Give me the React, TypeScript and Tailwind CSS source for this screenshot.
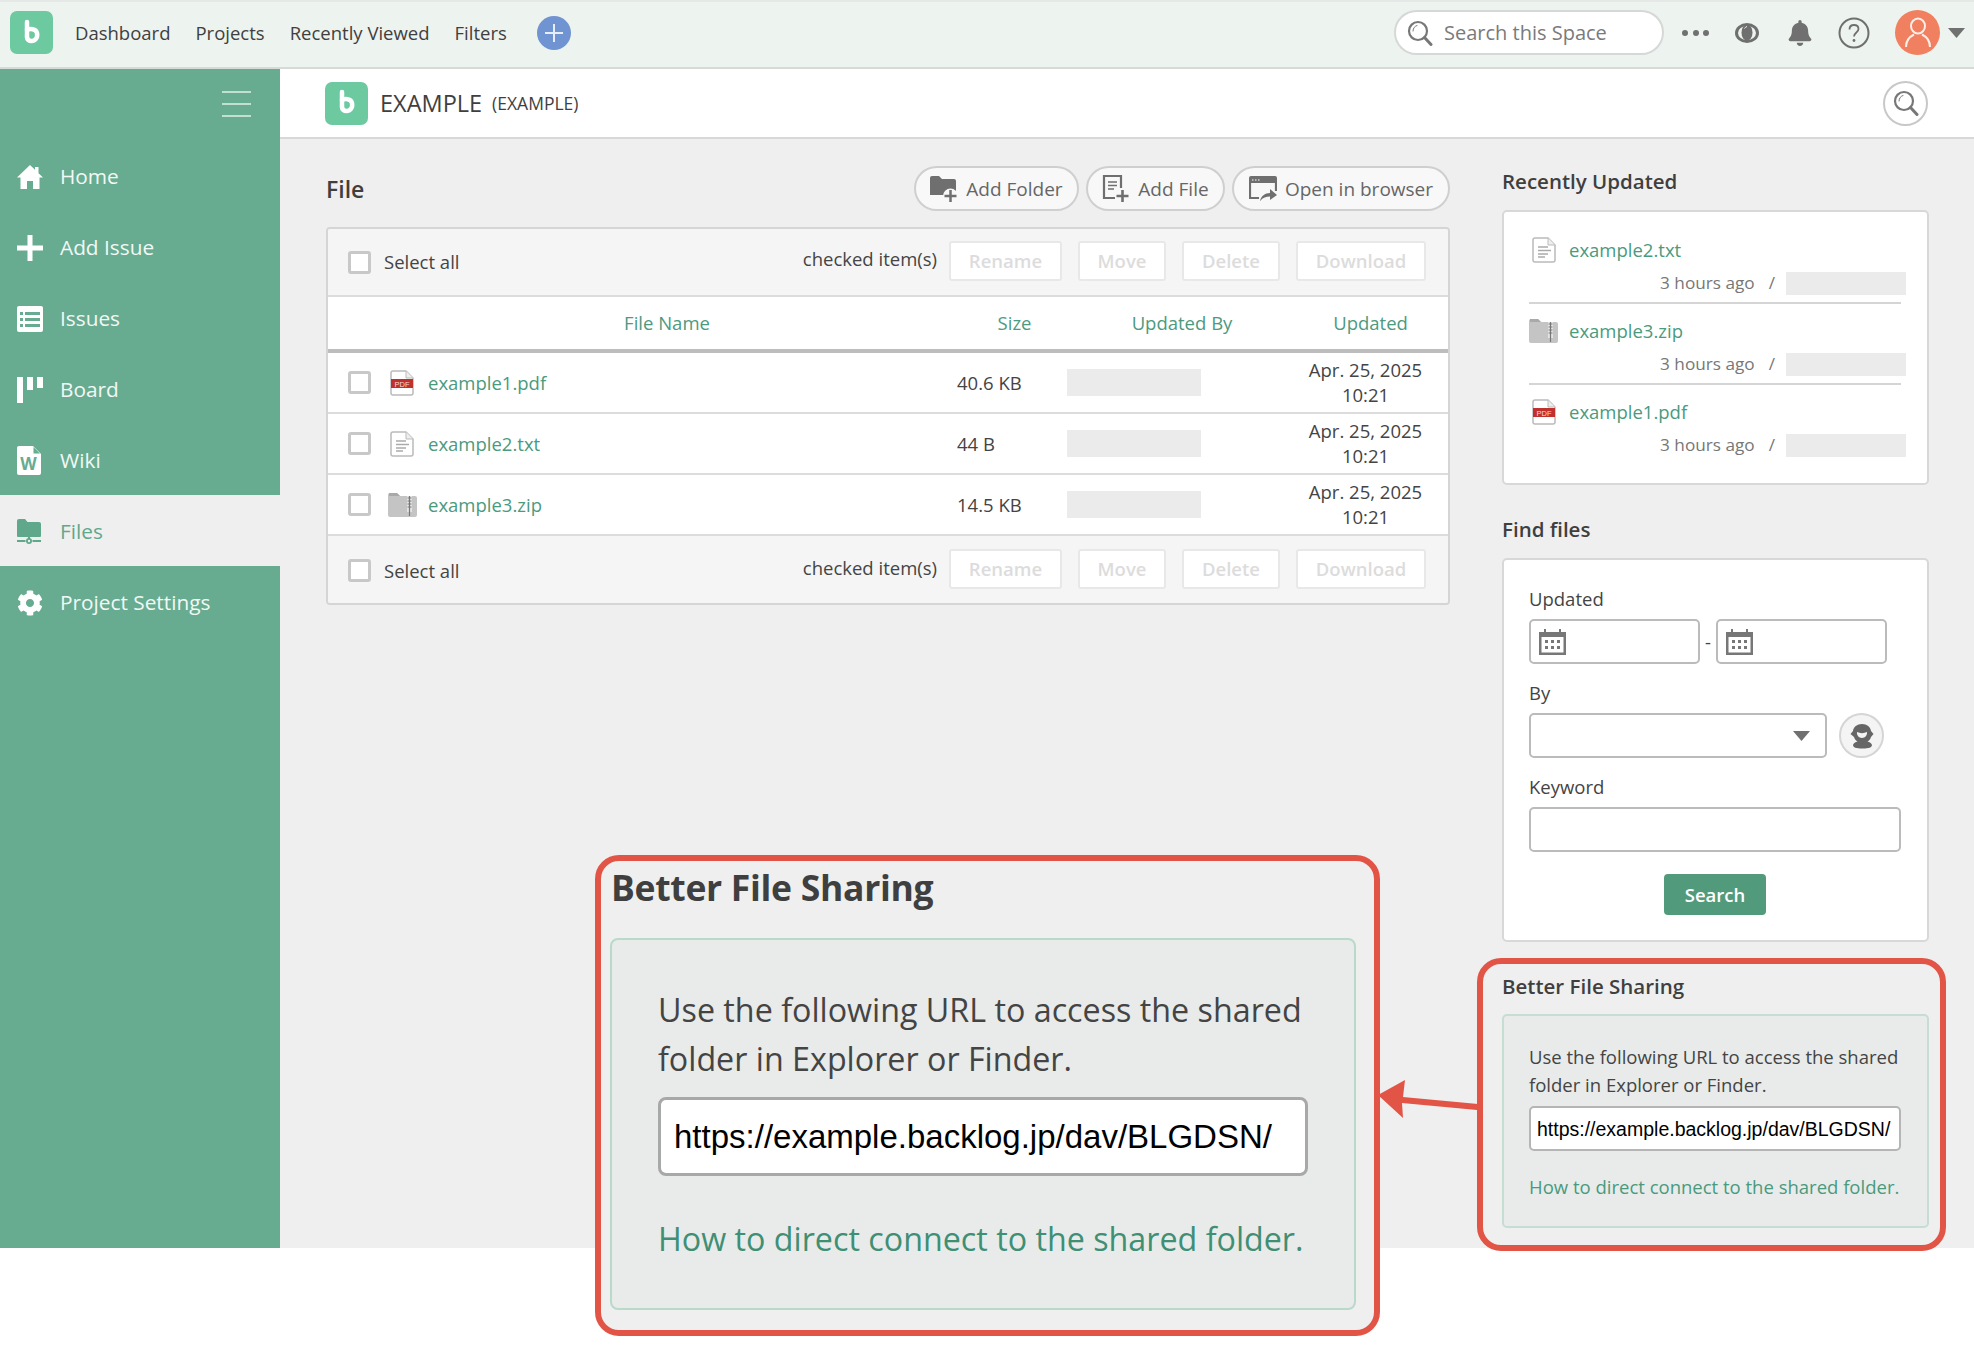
import { FaBell, FaCog } from "react-icons/fa";

const font = { fontFamily: '"Open Sans", sans-serif' };

function Logo() {
  return (
    <div className="flex h-[43px] w-[43px] shrink-0 items-center justify-center rounded-[7px] bg-[#6dc9a0]">
      <svg width="22" height="28" viewBox="0 0 22 28" fill="none" stroke="#fff" strokeWidth="4.5" strokeLinecap="round">
        <path d="M6 3v15" />
        <path d="M6 11c3-1.500 9-1.500 10 3 1 5-2 8-5.500 8-2.500 0-4.500-1.500-4.500-4" />
      </svg>
    </div>
  );
}

function Magnifier({ size = 26, color = "#777" }: { size?: number; color?: string }) {
  return (
    <svg width={size} height={size} viewBox="0 0 26 26" fill="none" stroke={color}>
      <circle cx="11" cy="11" r="9" strokeWidth="2.2" />
      <path d="M17.5 17.500 24 24.500" strokeWidth="3" strokeLinecap="round" />
      <path d="M6 11c0-3 2-5 4-5.500" strokeWidth="1" strokeLinecap="round" />
    </svg>
  );
}

function PdfIcon() {
  return (
    <svg width="24" height="26" viewBox="0 0 24 26">
      <path d="M3 1h13l7 7v15a2 2 0 0 1-2 2H3a2 2 0 0 1-2-2V3a2 2 0 0 1 2-2z" fill="#fff" stroke="#bbb" strokeWidth="1.5" />
      <path d="M16 1v7h7" fill="#eee" stroke="#bbb" strokeWidth="1" />
      <rect x="1" y="9" width="22" height="9" fill="#c0302c" />
      <text x="12" y="16.5" textAnchor="middle" fontSize="7.5" fill="#f5d9d8" style={{ fontFamily: '"Liberation Sans", sans-serif' }}>
        PDF
      </text>
    </svg>
  );
}

function TxtIcon() {
  return (
    <svg width="24" height="26" viewBox="0 0 24 26" fill="none">
      <path d="M3 1h13l7 7v15a2 2 0 0 1-2 2H3a2 2 0 0 1-2-2V3a2 2 0 0 1 2-2z" fill="#fff" stroke="#bbb" strokeWidth="1.5" />
      <path d="M16 1v7h7" fill="#eee" stroke="#bbb" strokeWidth="1" />
      <path d="M6 10h10M6 13.500h13M6 17h10M6 20h7" stroke="#aaa" strokeWidth="1.3" />
    </svg>
  );
}

function ZipIcon() {
  return (
    <svg width="29" height="24" viewBox="0 0 29 24">
      <path d="M0 2a2 2 0 0 1 2-2h7l3 3h15a2 2 0 0 1 2 2v17a2 2 0 0 1-2 2H2a2 2 0 0 1-2-2z" fill="#c4c4c4" />
      <path d="M1 0h8l3 3H1z" fill="#a9a9a9" />
      <rect x="19" y="3" width="5" height="16" fill="#e4e4e4" />
      <path d="M19.500 5h4M19.500 8h4M19.500 11h4M19.500 14h4M21.500 3v20" stroke="#777" strokeWidth="1.2" />
    </svg>
  );
}

function AddFolderIcon() {
  return (
    <svg width="28" height="28" viewBox="0 0 28 28">
      <path d="M0 3a2 2 0 0 1 2-2h7l3 3h12a2 2 0 0 1 2 2v14H0z" fill="#6f6f6f" />
      <circle cx="20.5" cy="21" r="7.5" fill="#f8f8f8" />
      <path d="M20.500 15v12M14.500 21h12" stroke="#6f6f6f" strokeWidth="2.5" />
    </svg>
  );
}

function AddFileIcon() {
  return (
    <svg width="28" height="28" viewBox="0 0 28 28" fill="none" stroke="#6f6f6f">
      <path d="M13 23H2V1h17v12" strokeWidth="2.2" />
      <path d="M6 7h9M6 10.500h9M6 14h6" strokeWidth="1.6" />
      <path d="M20.500 15v12M14.500 21h12" strokeWidth="2.6" />
    </svg>
  );
}

function OpenBrowserIcon() {
  return (
    <svg width="28" height="26" viewBox="0 0 28 26" fill="none">
      <path d="M2 0h24a2 2 0 0 1 2 2v5H0V2a2 2 0 0 1 2-2z" fill="#6f6f6f" />
      <path d="M3 4h1.500M6 4h1.500M9 4h1.500" stroke="#fff" strokeWidth="1.2" />
      <path d="M1 6v16h9M27 6v9" stroke="#6f6f6f" strokeWidth="2.2" />
      <path d="M11 25c1-5 5-8 10-8v-4l7 6-7 5v-3.500c-4 0-7 1-10 4.500z" fill="#6f6f6f" />
    </svg>
  );
}

function CalendarIcon() {
  return (
    <svg width="27" height="26" viewBox="0 0 27 26">
      <path d="M0 3h5V0h2v3h13V0h2v3h5v23H0z" fill="#777" />
      <rect x="2.5" y="8" width="22" height="15.5" fill="#fff" />
      <path d="M6 11h3v3H6zM12 11h3v3h-3zM18 11h3v3h-3zM6 17h3v3H6zM12 17h3v3h-3zM18 17h3v3h-3z" fill="#777" />
    </svg>
  );
}

const navIcons: Record<string, React.ReactNode> = {
  Home: (
    <svg width="26" height="26" viewBox="0 0 26 26" fill="#fff">
      <path d="M13 1 0 13.500h3.500V25h6.500v-8h6v8h6.500V13.500H26l-4.500-4.300V3h-3.500v2.800z" />
    </svg>
  ),
  "Add Issue": (
    <svg width="26" height="26" viewBox="0 0 26 26" fill="#fff">
      <path d="M10.500 0h5v10.500H26v5H15.500V26h-5V15.500H0v-5h10.500z" />
    </svg>
  ),
  Issues: (
    <svg width="26" height="26" viewBox="0 0 26 26">
      <rect width="26" height="26" rx="2" fill="#fff" />
      <path d="M3 6h3v3H3zM8 6h15v3H8zM3 12h3v3H3zM8 12h15v3H8zM3 18h3v3H3zM8 18h15v3H8z" fill="#67ac91" />
    </svg>
  ),
  Board: (
    <svg width="26" height="26" viewBox="0 0 26 26" fill="#fff">
      <path d="M0 0h6v26H0zM10 0h6v13h-6zM20 0h6v11h-6z" />
    </svg>
  ),
  Wiki: (
    <svg width="24" height="29" viewBox="0 0 24 29">
      <path d="M2 0h14l8 8v19a2 2 0 0 1-2 2H2a2 2 0 0 1-2-2V2a2 2 0 0 1 2-2z" fill="#fff" />
      <path d="M16.500 1 23 7.500h-6.500z" fill="#67ac91" />
      <text x="11.5" y="24" textAnchor="middle" fontSize="17" fontWeight="700" fill="#67ac91" style={font}>
        W
      </text>
    </svg>
  ),
  Files: (
    <svg width="24" height="26" viewBox="0 0 24 26" fill="#5fa88c">
      <path d="M0 2a2 2 0 0 1 2-2h6l2.500 3H22a2 2 0 0 1 2 2v12a1 1 0 0 1-1 1H1a1 1 0 0 1-1-1z" />
      <path d="M11 18h2v3h-2zM0 21h8.500v2H0zM15.500 21H24v2h-8.500z" />
      <circle cx="12" cy="22" r="3" />
      <circle cx="12" cy="22" r="1.2" fill="#efefef" />
    </svg>
  ),
  "Project Settings": <FaCog size={26} color="#fff" />,
};

const navItems = ["Home", "Add Issue", "Issues", "Board", "Wiki", "Files", "Project Settings"];

function Sidebar() {
  return (
    <aside className="flex h-[1179px] w-[280px] shrink-0 flex-col bg-[#67ac91]">
      <div className="flex h-[71px] items-start justify-end pr-[29px] pt-[22px]">
        <div className="flex w-[29px] flex-col gap-[10px]">
          <span className="h-[2px] bg-[#c3dfd3]" />
          <span className="h-[2px] bg-[#c3dfd3]" />
          <span className="h-[2px] bg-[#c3dfd3]" />
        </div>
      </div>
      {navItems.map((item) => (
        <div
          key={item}
          className={`flex h-[71px] items-center pl-[17px] pt-[2px] text-[20.8px] ${
            item === "Files" ? "bg-[#efefef] text-[#5fa88c]" : "text-[#f2f8f5]"
          }`}
        >
          <span className="flex w-[43px] justify-start">{navIcons[item]}</span>
          {item}
        </div>
      ))}
    </aside>
  );
}

function TopBar() {
  return (
    <header className="flex h-[69px] items-center border-t-2 border-b-2 border-t-[#e5e8e6] border-b-[#d8dad8] bg-[#edf3ef] pb-[4px] pl-[10px] text-[18.5px] text-[#3f3f3f]">
      <Logo />
      <nav className="ml-[22px] flex gap-[25px]">
        <span>Dashboard</span>
        <span>Projects</span>
        <span>Recently Viewed</span>
        <span>Filters</span>
      </nav>
      <div className="ml-[30px] flex h-[34px] w-[34px] items-center justify-center rounded-full bg-[#7093d2]">
        <svg width="20" height="20" viewBox="0 0 20 20" stroke="#e8eef8" strokeWidth="2">
          <path d="M10 1v18M1 10h18" />
        </svg>
      </div>
      <div className="ml-auto flex items-center pr-[9px]">
        <div className="flex h-[45px] w-[270px] items-center gap-[11px] rounded-full border-2 border-[#d5d8d6] bg-white pl-[11px] text-[20px] text-[#7a7a7a]">
          <Magnifier />
          <span>Search this Space</span>
        </div>
        <div className="ml-[18px] flex w-[27px] justify-between">
          <span className="h-[6px] w-[6px] rounded-full bg-[#707070]" />
          <span className="h-[6px] w-[6px] rounded-full bg-[#707070]" />
          <span className="h-[6px] w-[6px] rounded-full bg-[#707070]" />
        </div>
        <svg className="ml-[25px]" width="26" height="22" viewBox="0 0 26 22">
          <ellipse cx="13" cy="11" rx="12" ry="10" fill="#6f6f6f" />
          <ellipse cx="13" cy="11" rx="9" ry="7" fill="#edf3ef" />
          <ellipse cx="13" cy="10.5" rx="5.5" ry="8" fill="#6f6f6f" />
          <path d="M10.500 6.500a4 4 0 0 1 2.500-2" stroke="#edf3ef" fill="none" />
        </svg>
        <FaBell className="ml-[27px]" size={26} color="#707070" />
        <svg className="ml-[25px]" width="32" height="32" viewBox="0 0 32 32" fill="none">
          <circle cx="16" cy="16" r="14.5" stroke="#6f6f6f" strokeWidth="2" />
          <path d="M11.500 12.500c0-3 2-4.500 4.500-4.500s4.500 1.500 4.500 4c0 3.500-4.500 3.500-4.500 7.500" stroke="#6f6f6f" strokeWidth="1.8" />
          <circle cx="16" cy="23.5" r="1.4" fill="#6f6f6f" />
        </svg>
        <div className="ml-[25px] flex h-[45px] w-[45px] items-center justify-center rounded-full bg-[#f08060]">
          <svg width="28" height="32" viewBox="0 0 28 32" fill="none" stroke="#fdeee9" strokeWidth="2">
            <ellipse cx="14" cy="9" rx="7" ry="7.5" />
            <path d="M2 30c0-6 3-10 8-12.500M26 30c0-6-3-10-8-12.500" />
          </svg>
        </div>
        <svg className="ml-[8px]" width="17" height="10" viewBox="0 0 17 10" fill="#707070">
          <path d="M0 0h17l-8.500 10z" />
        </svg>
      </div>
    </header>
  );
}

function PillButton({ icon, label, className }: { icon: React.ReactNode; label: string; className: string }) {
  return (
    <button className={`flex h-[45px] items-center justify-center gap-[8px] rounded-full border-2 border-[#cfcfcf] bg-[#f8f8f8] pt-[1px] text-[19px] text-[#666] ${className}`}>
      {icon}
      {label}
    </button>
  );
}

function Checkbox() {
  return <span className="block h-[23px] w-[23px] shrink-0 rounded-[3px] border-[3px] border-[#c8c8c8] bg-white" />;
}

function Toolbar({ top }: { top: boolean }) {
  const actions = [
    { label: "Rename", w: "w-[113px]" },
    { label: "Move", w: "w-[88px]" },
    { label: "Delete", w: "w-[98px]" },
    { label: "Download", w: "w-[130px]" },
  ];
  return (
    <div className={`flex items-center bg-[#f5f5f5] pl-[20px] pr-[22px] text-[18.5px] text-[#444] ${top ? "h-[68px] border-b-2 border-[#dcdcdc]" : "h-[67px] pt-[2px]"}`}>
      <Checkbox />
      <span className="ml-[13px]">Select all</span>
      <div className="mb-[3px] ml-auto flex items-center gap-[16px]">
        <span className="-mt-[3px] mr-[-4px]">checked item(s)</span>
        {actions.map((a) => (
          <button key={a.label} className={`flex h-[40px] items-center justify-center rounded-[3px] border-2 border-[#e8e8e8] bg-white font-semibold text-[#dcdcdc] ${a.w}`}>
            {a.label}
          </button>
        ))}
      </div>
    </div>
  );
}

const files = [
  { name: "example1.pdf", size: "40.6 KB", icon: <PdfIcon /> },
  { name: "example2.txt", size: "44 B", icon: <TxtIcon /> },
  { name: "example3.zip", size: "14.5 KB", icon: <ZipIcon /> },
];

function FileTable() {
  return (
    <div className="mt-[16px] overflow-hidden rounded-[4px] border-2 border-[#d5d5d5] text-[18.5px]">
      <Toolbar top />
      <div className="grid h-[56px] grid-cols-[52px_574px_113px_230px_1fr] items-center border-b-4 border-[#bdbdbd] bg-white text-center text-[#4c9a80]">
        <span />
        <span>File Name</span>
        <span className="pl-[8px]">Size</span>
        <span>Updated By</span>
        <span className="pr-[4px]">Updated</span>
      </div>
      {files.map((f) => (
        <div key={f.name} className="grid h-[61px] grid-cols-[52px_574px_113px_230px_1fr] items-center border-b-2 border-[#dcdcdc] bg-white text-[#444]">
          <span className="pl-[20px]">
            <Checkbox />
          </span>
          <span className="flex items-center text-[#4a9a7e]">
            <span className="flex w-[48px] items-center justify-center pr-[8px] pl-[4px]">{f.icon}</span>
            {f.name}
          </span>
          <span className="pl-[3px]">{f.size}</span>
          <span className="h-[27px] w-[134px] bg-[#ebebeb]" />
          <span className="pb-[2px] pr-[14px] text-center leading-[25px]">
            Apr. 25, 2025
            <br />
            10:21
          </span>
        </div>
      ))}
      <Toolbar top={false} />
    </div>
  );
}

const recent = [
  { name: "example2.txt", icon: <TxtIcon />, divider: true },
  { name: "example3.zip", icon: <ZipIcon />, divider: true },
  { name: "example1.pdf", icon: <PdfIcon />, divider: false },
];

function RecentlyUpdated() {
  return (
    <>
      <h2 className="text-[20.5px] leading-[30px] font-semibold text-[#3f3f3f]">Recently Updated</h2>
      <div className="mt-[14px] h-[275px] rounded-[5px] border-2 border-[#d8d8d8] bg-white pl-[25px] pr-[26px] pt-[11px]">
        {recent.map((r) => (
          <div key={r.name} className={`pt-[13px] pb-[5px] ${r.divider ? "border-b-2 border-[#d5d5d5]" : ""}`}>
            <div className="flex h-[28px] items-center text-[18.5px] text-[#4a9a7e]">
              <span className="flex w-[40px] justify-center pr-[11px]">{r.icon}</span>
              {r.name}
            </div>
            <div className="-mr-[5px] mt-[5px] flex h-[28px] items-center justify-end text-[17.2px] text-[#777]">
              <span>3 hours ago</span>
              <span className="ml-[14px] mr-[11px]">/</span>
              <span className="h-[23px] w-[120px] bg-[#ebebeb]" />
            </div>
          </div>
        ))}
      </div>
    </>
  );
}

function FindFiles() {
  return (
    <>
      <h2 className="mt-[29px] text-[20.5px] leading-[30px] font-semibold text-[#3f3f3f]">Find files</h2>
      <div className="mt-[14px] h-[384px] rounded-[5px] border-2 border-[#d8d8d8] bg-white pl-[25px] pt-[27px] text-[18.5px] leading-[24px] text-[#444]">
        <div>Updated</div>
        <div className="mt-[8px] flex items-center">
          <div className="flex h-[45px] w-[171px] items-center rounded-[5px] border-2 border-[#bbb] pl-[8px]">
            <CalendarIcon />
          </div>
          <span className="w-[16px] text-center">-</span>
          <div className="flex h-[45px] w-[171px] items-center rounded-[5px] border-2 border-[#bbb] pl-[8px]">
            <CalendarIcon />
          </div>
        </div>
        <div className="mt-[17px]">By</div>
        <div className="mt-[8px] flex items-center">
          <div className="flex h-[45px] w-[298px] items-center justify-end rounded-[5px] border-2 border-[#bbb] pr-[15px]">
            <svg width="17" height="10" viewBox="0 0 17 10" fill="#707070">
              <path d="M0 0h17l-8.500 10z" />
            </svg>
          </div>
          <div className="ml-[12px] flex h-[45px] w-[45px] items-center justify-center rounded-full border-2 border-[#d5d5d5] bg-[#f4f4f4]">
            <svg width="28" height="26" viewBox="0 0 28 26" fill="#666">
              <path d="M14 1c5 0 8.500 3 9 7l2.500 3-2.500 3c-.5 2-2 3.500-3.500 4.500 2 .5 4 1.500 4.500 3.500 0 2.500-3 3.500-9.500 3.500S5 24.500 5 22c.5-2 2.500-3 4.500-3.500C8 17.500 6.500 16 6 14l-3.500-3L5 8c.5-4 4-7 9-7zM9 9c-.5 3 2 6 5 6s5.500-3 5-6c-3 1.500-7 1.500-10 0z" />
            </svg>
          </div>
        </div>
        <div className="mt-[17px]">Keyword</div>
        <div className="mt-[8px] h-[45px] w-[372px] rounded-[5px] border-2 border-[#bbb]" />
        <button className="ml-[135px] mt-[22px] flex h-[41px] w-[102px] items-center justify-center rounded-[4px] bg-[#529a7c] font-semibold text-white">
          Search
        </button>
      </div>
    </>
  );
}

function SharingPanel() {
  return (
    <>
      <h2 className="mt-[29px] text-[20.5px] leading-[30px] font-semibold text-[#3f3f3f]">Better File Sharing</h2>
      <div className="mt-[13px] h-[214px] rounded-[5px] border-2 border-[#c5ddd2] bg-[#e8ebea] pl-[25px] pt-[27px] text-[18.5px] leading-[28px] text-[#444]">
        <p>
          Use the following URL to access the shared
          <br />
          folder in Explorer or Finder.
        </p>
        <div className="mt-[7px] flex h-[45px] w-[372px] items-center rounded-[5px] border-2 border-[#b5b5b5] bg-white pl-[6px] text-[19.5px] text-black" style={{ fontFamily: '"Liberation Sans", sans-serif' }}>
          https://example.backlog.jp/dav/BLGDSN/
        </div>
        <p className="mt-[22px] text-[#4a9a7e]">How to direct connect to the shared folder.</p>
      </div>
    </>
  );
}

// Zoomed copy of the panel and the arrow pointing at it, both drawn over the page
function Callout() {
  return (
    <>
      <div className="absolute left-[595px] top-[855px] h-[481px] w-[785px] rounded-[24px] border-[6px] border-[#e25546] bg-[#efefef] pl-[9px]">
        <h2 className="ml-[1px] mt-[1px] text-[35.5px] leading-[50px] font-bold tracking-[-0.3px] text-[#3f3f3f]">Better File Sharing</h2>
        <div className="mt-[26px] h-[372px] w-[746px] rounded-[8px] border-2 border-[#b9d9cb] bg-[#e8ebea] pl-[46px] pt-[45px] text-[32.25px] leading-[49px] text-[#444]">
          <p>
            Use the following URL to access the shared
            <br />
            folder in Explorer or Finder.
          </p>
          <div className="mt-[14px] flex h-[79px] w-[650px] items-center rounded-[8px] border-[3px] border-[#a8a8a8] bg-white pl-[13px] text-[33px] text-black" style={{ fontFamily: '"Liberation Sans", sans-serif' }}>
            https://example.backlog.jp/dav/BLGDSN/
          </div>
          <p className="mt-[38px] text-[#3f8f75]">How to direct connect to the shared folder.</p>
        </div>
      </div>
      <div className="absolute left-[1477px] top-[958px] h-[293px] w-[469px] rounded-[24px] border-[6px] border-[#e25546]" />
      <svg className="absolute left-[1376px] top-[1076px]" width="104" height="42" viewBox="0 0 104 42">
        <path d="M2 19 29 4l-2 17 75 7-1 6-75-7 1 15z" fill="#e25546" />
      </svg>
    </>
  );
}

export default function App() {
  return (
    <div className="relative h-[1348px] w-[1974px] overflow-hidden bg-white" style={font}>
      <TopBar />
      <div className="flex items-start">
        <Sidebar />
        <main className="min-w-0 flex-1">
          <div className="flex h-[70px] items-center justify-between border-b-2 border-[#d8d8d8] bg-white pl-[45px] pr-[46px]">
            <div className="flex items-center">
              <Logo />
              <span className="ml-[12px] pt-[1px] text-[23.5px] text-[#3f3f3f]">EXAMPLE</span>
              <span className="ml-[10px] text-[17.5px] font-medium text-[#3f3f3f]">(EXAMPLE)</span>
            </div>
            <div className="flex h-[45px] w-[45px] items-center justify-center rounded-full border-2 border-[#c8c8c8]">
              <Magnifier />
            </div>
          </div>
          <div className="flex h-[1109px] gap-[52px] bg-[#efefef] pl-[46px] pt-[27px]">
            <section className="w-[1124px]">
              <div className="flex items-center justify-between">
                <h1 className="mt-[1px] text-[23px] font-semibold text-[#3f3f3f]">File</h1>
                <div className="flex gap-[7px]">
                  <PillButton icon={<AddFolderIcon />} label="Add Folder" className="w-[165px]" />
                  <PillButton icon={<AddFileIcon />} label="Add File" className="w-[139px]" />
                  <PillButton icon={<OpenBrowserIcon />} label="Open in browser" className="w-[218px]" />
                </div>
              </div>
              <FileTable />
            </section>
            <section className="w-[427px]">
              <RecentlyUpdated />
              <FindFiles />
              <SharingPanel />
            </section>
          </div>
        </main>
      </div>
      <Callout />
    </div>
  );
}
